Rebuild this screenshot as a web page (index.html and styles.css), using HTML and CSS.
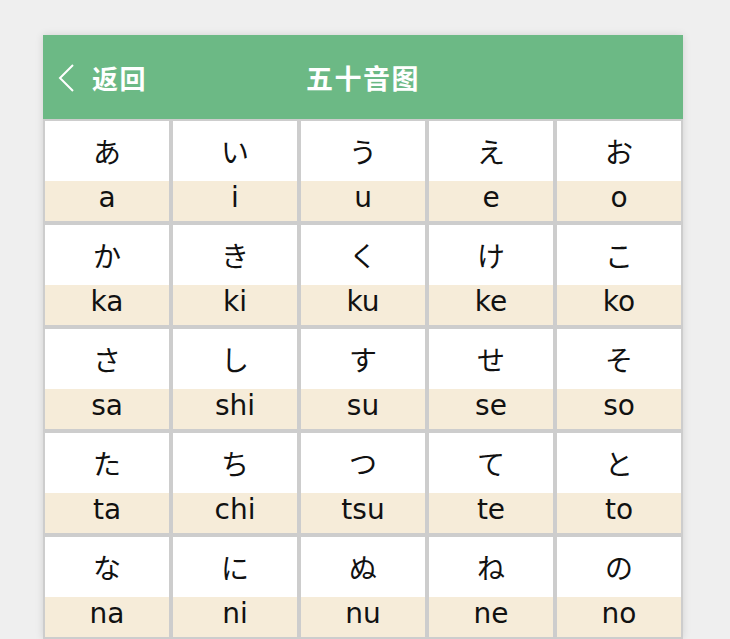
FILE: index.html
```html
<!DOCTYPE html>
<html lang="zh">
<head>
<meta charset="utf-8">
<title>五十音图</title>
<link rel="stylesheet" href="styles.css">
</head>
<body>
<div class="app">
  <header class="topbar">
    <a class="back" href="#">
      <svg class="chev" width="18" height="30" viewBox="0 0 18 30" aria-hidden="true"><polyline points="16,2 3,15 16,28" fill="none" stroke="#fff" stroke-width="2"/></svg>
      <span class="back-text">返回</span>
    </a>
    <h1 class="title">五十音图</h1>
  </header>
  <main class="grid">
    <div class="cell"><div class="kana">あ</div><div class="romaji">a</div></div>
    <div class="cell"><div class="kana">い</div><div class="romaji">i</div></div>
    <div class="cell"><div class="kana">う</div><div class="romaji">u</div></div>
    <div class="cell"><div class="kana">え</div><div class="romaji">e</div></div>
    <div class="cell"><div class="kana">お</div><div class="romaji">o</div></div>
    <div class="cell"><div class="kana">か</div><div class="romaji">ka</div></div>
    <div class="cell"><div class="kana">き</div><div class="romaji">ki</div></div>
    <div class="cell"><div class="kana">く</div><div class="romaji">ku</div></div>
    <div class="cell"><div class="kana">け</div><div class="romaji">ke</div></div>
    <div class="cell"><div class="kana">こ</div><div class="romaji">ko</div></div>
    <div class="cell"><div class="kana">さ</div><div class="romaji">sa</div></div>
    <div class="cell"><div class="kana">し</div><div class="romaji">shi</div></div>
    <div class="cell"><div class="kana">す</div><div class="romaji">su</div></div>
    <div class="cell"><div class="kana">せ</div><div class="romaji">se</div></div>
    <div class="cell"><div class="kana">そ</div><div class="romaji">so</div></div>
    <div class="cell"><div class="kana">た</div><div class="romaji">ta</div></div>
    <div class="cell"><div class="kana">ち</div><div class="romaji">chi</div></div>
    <div class="cell"><div class="kana">つ</div><div class="romaji">tsu</div></div>
    <div class="cell"><div class="kana">て</div><div class="romaji">te</div></div>
    <div class="cell"><div class="kana">と</div><div class="romaji">to</div></div>
    <div class="cell"><div class="kana">な</div><div class="romaji">na</div></div>
    <div class="cell"><div class="kana">に</div><div class="romaji">ni</div></div>
    <div class="cell"><div class="kana">ぬ</div><div class="romaji">nu</div></div>
    <div class="cell"><div class="kana">ね</div><div class="romaji">ne</div></div>
    <div class="cell"><div class="kana">の</div><div class="romaji">no</div></div>
  </main>
</div>
</body>
</html>
```
FILE: styles.css
```css
html, body {
  margin: 0;
  padding: 0;
  height: 639px;
  overflow: hidden;
}
body {
  background: #efefef;
  font-family: "DejaVu Sans", "Noto Sans CJK JP", sans-serif;
  color: #111;
}
.app {
  width: 640px;
  margin: 35px 0 0 43px;
  box-shadow: 0 0 8px rgba(0, 0, 0, 0.12);
  background: #ccc;
}
.topbar {
  position: relative;
  height: 84px;
  background: #6cb985;
  display: flex;
  align-items: center;
  justify-content: center;
}
.back {
  position: absolute;
  left: 14px;
  top: 0;
  height: 84px;
  display: flex;
  align-items: center;
  gap: 17px;
  color: #fff;
  text-decoration: none;
}
.chev {
  display: block;
  margin-top: 1px;
}
.back-text, .title {
  font-family: "Noto Sans CJK SC", sans-serif;
  font-weight: 700;
  font-size: 26px;
  color: #fff;
  letter-spacing: 1.5px;
}
.title {
  margin: 0;
  font-size: 27px;
}
.grid {
  display: grid;
  grid-template-columns: repeat(5, 128px);
}
.cell {
  box-sizing: border-box;
  height: 104px;
  border: 2px solid #cdcdcd;
  display: flex;
  flex-direction: column;
  text-align: center;
}
.kana {
  height: 60px;
  line-height: 60px;
  background: #fff;
  font-family: "Noto Sans CJK JP", sans-serif;
  font-weight: 400;
  font-size: 28px;
}
.romaji {
  height: 40px;
  line-height: 34px;
  background: #f6ecd9;
  font-family: "DejaVu Sans", sans-serif;
  font-size: 28px;
}
```
